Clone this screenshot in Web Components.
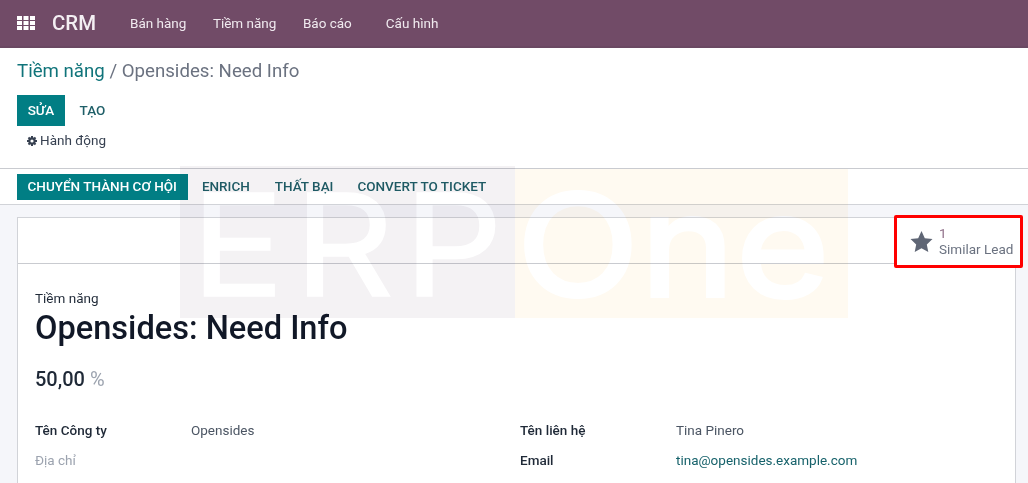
<!DOCTYPE html>
<html lang="vi"><head><meta charset="utf-8"><title>CRM</title>
<style>
html,body{margin:0;padding:0;height:483px;overflow:hidden;background:#fff}
body{font-family:Roboto,"Noto Sans",sans-serif;font-size:13.5px;color:#4c4c4c;position:relative}
</style></head><body>
<app-navbar></app-navbar>
<control-panel></control-panel>
<status-bar></status-bar>
<form-sheet></form-sheet>
<water-mark></water-mark>
<script>
const def=(name,html)=>customElements.define(name,class extends HTMLElement{constructor(){super();this.attachShadow({mode:'open'}).innerHTML=html}});
def('app-navbar',`<style>
:host{display:flex;align-items:center;height:46px;background:#714b67;border-bottom:2px solid #6a4862;color:#fff;padding-left:17px;box-sizing:content-box}
svg{display:block;flex:none}
.brand{font-size:20.4px;font-weight:500;margin-left:17px;width:78px;color:#f4eff3}
a{font-size:13.5px;color:#f0eaef}
a.a{margin-right:26.5px}
a.b{margin-right:34px}
</style>
<svg width="18" height="14" viewBox="0 0 18 14" fill="#fff"><rect x="0" y="0" width="5" height="4"/><rect x="6.5" y="0" width="5" height="4"/><rect x="13" y="0" width="5" height="4"/><rect x="0" y="5" width="5" height="4"/><rect x="6.5" y="5" width="5" height="4"/><rect x="13" y="5" width="5" height="4"/><rect x="0" y="10" width="5" height="4"/><rect x="6.5" y="10" width="5" height="4"/><rect x="13" y="10" width="5" height="4"/></svg>
<span class="brand">CRM</span>
<a class="a">Bán hàng</a><a class="a">Tiềm năng</a><a class="b">Báo cáo</a><a>Cấu hình</a>`);
def('control-panel',`<style>
:host{display:block;height:120px;padding:0 17px;border-bottom:1px solid #c9cbd0;background:#fff}
.crumb{font-size:18.67px;line-height:24px;padding-top:11px;color:#6b7280;white-space:nowrap}
.crumb b{font-weight:400;color:#10747a}
.row{display:flex;margin-top:12px;height:31px;align-items:stretch}
.pri{background:#017e84;color:#fff;font-weight:500;width:48px;display:flex;align-items:center;justify-content:center;padding-bottom:1px;box-sizing:border-box}
.sec{color:#1f5f68;font-weight:500;width:55px;display:flex;align-items:center;justify-content:center;padding-bottom:1px;box-sizing:border-box}
.act{display:flex;align-items:center;gap:3px;margin:4px 0 0 10px;height:20px;color:#374151}
svg{display:block}
</style>
<div class="crumb"><b>Tiềm năng</b> / Opensides: Need Info</div>
<div class="row"><div class="pri">SỬA</div><div class="sec">TẠO</div></div>
<div class="act"><svg width="10" height="10" viewBox="0 0 10 10" style="margin-top:2px"><g fill="#374151"><rect x="4" y="0" width="2" height="10"/><rect x="4" y="0" width="2" height="10" transform="rotate(45 5 5)"/><rect x="4" y="0" width="2" height="10" transform="rotate(90 5 5)"/><rect x="4" y="0" width="2" height="10" transform="rotate(135 5 5)"/></g><circle cx="5" cy="5" r="2.7" fill="none" stroke="#374151" stroke-width="2"/><circle cx="5" cy="5" r="1.6" fill="#fff"/></svg><span>Hành động</span></div>`);
def('status-bar',`<style>
:host{display:flex;align-items:center;height:36px;padding-left:17px;border-bottom:1px solid #d1d3d8;background:#fff;box-sizing:border-box}
div{font-weight:500;color:#1f5f68;height:26px;line-height:25px;white-space:nowrap}
.p{background:#017e84;color:#fff;padding:0 11px 0 10.5px;margin-right:14px}
.e{margin-right:25px}
.t{margin-right:24px}
</style><div class="p">CHUYỂN THÀNH CƠ HỘI</div><div class="e">ENRICH</div><div class="t">THẤT BẠI</div><div>CONVERT TO TICKET</div>`);
def('stat-button',`<style>
:host{display:flex;align-items:center;box-sizing:border-box;width:129.5px;height:53px;margin:-3px -8px 0 0;border:3.5px solid #f00;border-radius:2px;background:#fff;padding-left:13.5px;gap:6px;position:relative;flex:none}
svg{display:block;flex:none}
.t{display:flex;flex-direction:column;line-height:16px;color:#6b7280;white-space:nowrap;margin-top:-2px}
.n{color:#8f6f88}
</style>
<svg width="23" height="22" viewBox="0 0 23 22"><path fill="#5f6675" d="M11.5 0l3.3 7.2 7.7.9-5.7 5.3 1.5 7.6-6.8-3.8-6.8 3.8 1.5-7.6L.5 8.1l7.7-.9z"/></svg>
<div class="t"><span class="n">1</span><span>Similar Lead</span></div>`);
def('form-sheet',`<style>
:host{display:block;background:#f5f6fa;padding:12px 12px 0 17px;height:278px;box-sizing:border-box;overflow:hidden}
.card{background:#fff;border:1px solid #d1d3d8;border-bottom:0;height:300px;box-sizing:border-box}
.box{display:flex;justify-content:flex-end;height:45px;border-bottom:1px solid #c9cbd0}
.body{padding:26px 17px 0 17px}
.lab{line-height:16px;color:#1f2937}
h1{margin:3px 0 0;font-size:32.6px;font-weight:500;line-height:38px;color:#111827}
.pct{margin-top:17px;font-size:20px;line-height:30px;color:#1f2937;font-weight:500}
.pct span{color:#9ca3af;margin-left:0;font-weight:400}
.grid{display:grid;grid-template-columns:156px 329px 156px 1fr;grid-template-rows:20px 20px;row-gap:9.5px;margin-top:26px;line-height:20px}
.k{font-weight:500;color:#1f2937}
.v{color:#4b5563}
.m{color:#9ca3af}
.l{color:#17626b}
</style>
<div class="card"><div class="box"><stat-button></stat-button></div>
<div class="body"><div class="lab">Tiềm năng</div><h1>Opensides: Need Info</h1><div class="pct">50,00 <span>%</span></div>
<div class="grid"><div class="k">Tên Công ty</div><div class="v">Opensides</div><div class="k">Tên liên hệ</div><div class="v">Tina Pinero</div>
<div class="m">Địa chỉ</div><div></div><div class="k">Email</div><div class="l">tina@opensides.example.com</div></div></div></div>`);
def('water-mark',`<style>
:host{position:absolute;left:180px;top:166px;display:flex;pointer-events:none;align-items:flex-end;height:152px;mix-blend-mode:multiply}
div{box-sizing:border-box;color:#fff;font-family:Inter,Roboto,sans-serif;font-weight:400;line-height:1;white-space:nowrap;position:relative}
span{position:absolute;left:0;top:0;font-size:141px;transform-origin:0 0}
.a{width:335px;height:152px;background:#f4f2f4}
.b{width:333px;height:149px;background:#fffaf1}
.a span{left:11px;top:8px;transform:scaleX(1.1);letter-spacing:9px;-webkit-text-stroke:1.5px #fff}
.b span{left:2px;top:5px;transform:scaleX(1.13);letter-spacing:1.5px;-webkit-text-stroke:4px #fff}
</style><div class="a"><span>ERP</span></div><div class="b"><span>One</span></div>`);
</script>
</body></html>
